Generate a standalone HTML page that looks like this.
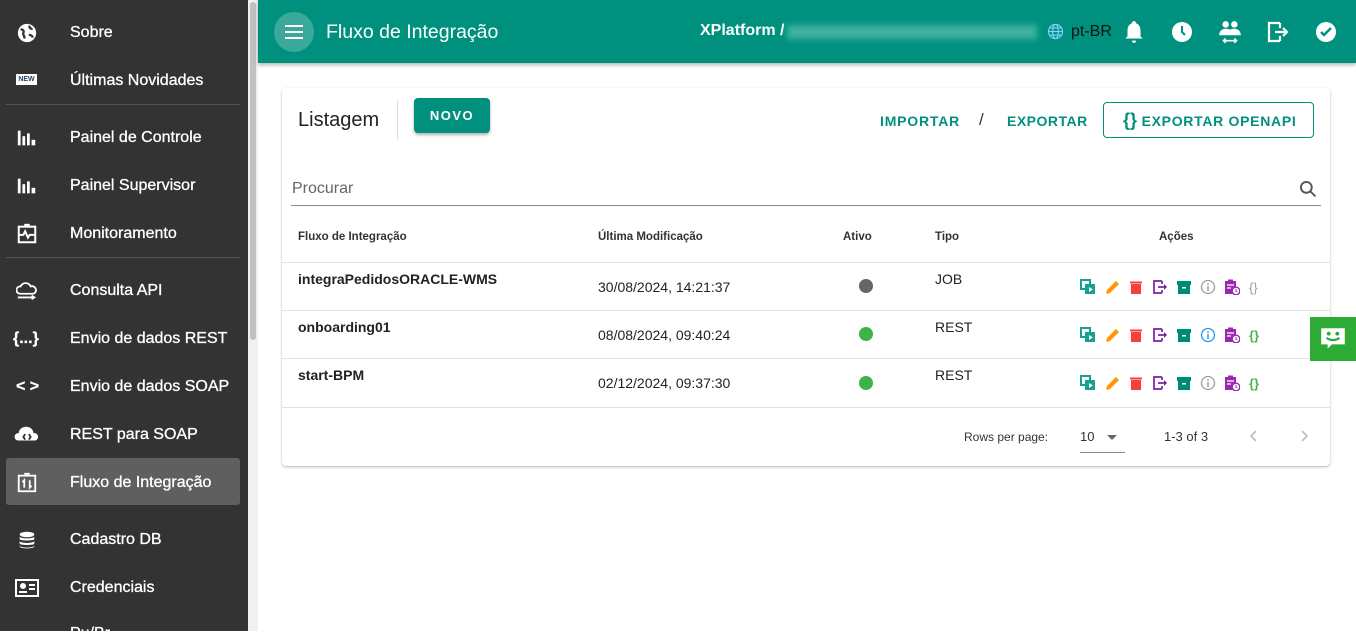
<!DOCTYPE html>
<html><head><meta charset="utf-8"><style>
*{box-sizing:border-box;margin:0;padding:0}
body{width:1356px;height:631px;overflow:hidden;background:#fff;font-family:"Liberation Sans",Arial,sans-serif;position:relative}
.sb{position:absolute;left:0;top:0;width:248px;height:631px;background:#333}
.scroll{position:absolute;left:248px;top:0;width:10px;height:631px;background:#f0f0f0}
.thumb{position:absolute;left:250px;top:2px;width:6px;height:338px;background:#c1c1c1;border-radius:3px}
.it{position:absolute;left:70px;color:#fff;font-size:16px;line-height:20px;margin-top:2px;-webkit-text-stroke:0.3px #fff}
.ic{position:absolute;left:16px;width:22px;height:22px;margin-top:2px}
.hr{position:absolute;left:6px;width:234px;height:1px;background:#555}
.hdr{position:absolute;left:258px;top:0;width:1098px;height:63px;background:#00917e;box-shadow:0 2px 4px rgba(0,0,0,.3)}
.card{position:absolute;left:282px;top:88px;width:1048px;height:378px;background:#fff;border-radius:4px;box-shadow:0 1px 3px rgba(0,0,0,.2),0 1px 1px rgba(0,0,0,.12)}
.a{position:absolute}
.th{position:absolute;top:231px;font-size:11.5px;color:#333;font-weight:bold}
.row{position:absolute;left:282px;width:1048px;height:1px;background:#e0e0e0}
.nm{position:absolute;left:298px;font-size:14px;font-weight:bold;color:#222}
.dt{position:absolute;left:598px;font-size:14px;color:#222}
.tp{position:absolute;left:935px;font-size:14px;color:#222}
.dot{position:absolute;left:859px;width:14px;height:14px;border-radius:50%}
.acts{position:absolute;left:1080px;display:flex;gap:8px}
.acts svg{width:16px;height:16px}
</style></head><body>
<div class="sb"></div><div class="scroll"></div><div class="thumb"></div>
<svg class="ic" style="top:20px" viewBox="0 0 24 24"><circle cx="12" cy="12" r="10" fill="#fff"/><path d="M5 8c3 0 4 2 3 4s2 3 1 6M15 4c-1 2 1 4 3 3M14 14c2 0 4 1 4 3" stroke="#333" stroke-width="2.5" fill="none"/></svg>
<div class="it" style="top:21px">Sobre</div>
<div class="a" style="left:16px;top:74px;width:21px;height:11px;background:#fff;color:#246;font-size:7px;font-weight:bold;text-align:center;line-height:11px">NEW</div>
<div class="it" style="top:69px">Últimas Novidades</div>
<div class="hr" style="top:104px"></div>
<svg class="ic" style="top:125px" viewBox="0 0 24 24" fill="#fff"><rect x="2" y="4" width="3" height="16"/><rect x="7" y="10" width="3" height="10"/><rect x="12" y="7" width="3" height="13"/><rect x="17" y="14" width="4" height="6"/></svg>
<div class="it" style="top:126px">Painel de Controle</div>
<svg class="ic" style="top:173px" viewBox="0 0 24 24" fill="#fff"><rect x="2" y="4" width="3" height="16"/><rect x="7" y="10" width="3" height="10"/><rect x="12" y="7" width="3" height="13"/><rect x="17" y="14" width="4" height="6"/></svg>
<div class="it" style="top:174px">Painel Supervisor</div>
<svg class="ic" style="top:221px" viewBox="0 0 24 24" fill="none" stroke="#fff" stroke-width="2.2"><rect x="3" y="4" width="18" height="17"/><path d="M3 13h5l2-4 3 7 2-3h6"/><path d="M9 2h6"/></svg>
<div class="it" style="top:222px">Monitoramento</div>
<div class="hr" style="top:257px"></div>
<svg class="ic" style="top:278px" viewBox="0 0 24 24" fill="none" stroke="#fff" stroke-width="2"><path d="M4 15a4 4 0 0 1 1-8a6 6 0 0 1 11 0a4 4 0 0 1 3 8z"/><path d="M2 19h18M17 17l3 2-3 2"/></svg>
<div class="it" style="top:279px">Consulta API</div>
<div class="it" style="left:13px;top:327px;font-weight:bold">{...}</div>
<div class="it" style="top:327px">Envio de dados REST</div>
<div class="it" style="left:16px;top:375px;font-weight:bold">&lt; &gt;</div>
<div class="it" style="top:375px">Envio de dados SOAP</div>
<svg class="ic" style="left:14px;width:26px;top:422px" viewBox="0 0 26 24"><path d="M3 18a4 4 0 0 1 1-8a8 7 0 0 1 16 0a4 4 0 0 1 2 8z" fill="#fff"/><path d="M11 11l-2 3 2 3M15 11l2 3-2 3" stroke="#333" stroke-width="2" fill="none"/></svg>
<div class="it" style="top:423px">REST para SOAP</div>
<div class="a" style="left:6px;top:458px;width:234px;height:47px;background:#5f5f5f;border-radius:3px"></div>
<svg class="ic" style="top:470px" viewBox="0 0 24 24" fill="none" stroke="#fff" stroke-width="2"><rect x="3" y="4" width="18" height="17"/><path d="M9 2h6M9 17V9l-2 2M15 9v8l2-2"/></svg>
<div class="it" style="top:471px">Fluxo de Integração</div>
<svg class="ic" style="top:527px" viewBox="0 0 24 24" fill="#fff"><ellipse cx="12" cy="6" rx="8" ry="3"/><path d="M4 8v3c0 2 16 2 16 0V8c0 3-16 3-16 0zM4 13v3c0 2 16 2 16 0v-3c0 3-16 3-16 0zM4 18v1c0 3 16 3 16 0v-1c0 3-16 3-16 0z"/></svg>
<div class="it" style="top:528px">Cadastro DB</div>
<svg class="ic" style="left:14px;top:575px;width:26px" viewBox="0 0 26 22" fill="none" stroke="#fff" stroke-width="2"><rect x="2" y="3" width="22" height="16"/><circle cx="9" cy="9" r="2" fill="#fff"/><path d="M5 15h8M15 8h6M15 12h6" /></svg>
<div class="it" style="top:576px">Credenciais</div>
<div class="it" style="top:622px">Pu/Br</div>

<div class="hdr"></div>
<div class="a" style="left:274px;top:12px;width:40px;height:40px;border-radius:50%;background:#3aa999"></div>
<div class="a" style="left:285px;top:25px;width:18px;height:2px;background:#fff;box-shadow:0 6px 0 #fff,0 12px 0 #fff"></div>
<div class="a" style="left:326px;top:21px;color:#fff;font-size:19.5px">Fluxo de Integração</div>
<div class="a" style="left:700px;top:22px;color:#fff;font-size:16px;font-weight:bold">XPlatform /</div>
<div class="a" style="left:787px;top:25px;width:250px;height:14px;background:#3fb0a0;filter:blur(3px)"></div>
<svg class="a" style="left:1047px;top:23px;width:17px;height:17px" viewBox="0 0 24 24" fill="none" stroke="#7fd0ff" stroke-width="1.6"><circle cx="12" cy="12" r="10"/><ellipse cx="12" cy="12" rx="4" ry="10"/><path d="M2 12h20M4 7h16M4 17h16"/></svg>
<div class="a" style="left:1071px;top:23px;color:#111;font-size:16px">pt-BR</div>
<svg class="a" style="left:1121px;top:18px;width:26px;height:28px" viewBox="0 0 24 24" fill="#fff"><path d="M12 2a2 2 0 0 1 2 2c3 1 4 4 4 7v5l2 2H4l2-2v-5c0-3 1-6 4-7a2 2 0 0 1 2-2zM10 20h4a2 2 0 0 1-4 0z"/></svg>
<svg class="a" style="left:1170px;top:20px;width:24px;height:24px" viewBox="0 0 24 24"><circle cx="12" cy="12" r="10" fill="#fff"/><path d="M12 6v6l3 3" stroke="#00917e" stroke-width="2" fill="none"/></svg>
<svg class="a" style="left:1217px;top:19px;width:26px;height:26px" viewBox="0 0 24 24" fill="#fff"><circle cx="8" cy="5" r="3"/><circle cx="16" cy="5" r="3"/><path d="M2 15c0-4 3-6 6-6s4 1 4 1 1-1 4-1 6 2 6 6z"/><path d="M6 20h12M8 18l-2 2 2 2M16 18l2 2-2 2" stroke="#fff" stroke-width="1.5" fill="none"/></svg>
<svg class="a" style="left:1266px;top:20px;width:24px;height:24px" viewBox="0 0 24 24" fill="none" stroke="#fff" stroke-width="2.2"><path d="M14 3H3v18h11M14 8v-5M14 21v-5"/><path d="M9 12h12M17 8l4 4-4 4"/></svg>
<svg class="a" style="left:1314px;top:20px;width:24px;height:24px" viewBox="0 0 24 24"><circle cx="12" cy="12" r="10" fill="#fff"/><path d="M7 12l3 3 7-7" stroke="#00917e" stroke-width="2.4" fill="none"/></svg>

<div class="card"></div>
<div class="a" style="left:298px;top:109px;font-size:20px;color:#222">Listagem</div>
<div class="a" style="left:397px;top:100px;width:1px;height:40px;background:#ddd"></div>
<div class="a" style="left:414px;top:98px;width:76px;height:35px;background:#00917e;border-radius:4px;box-shadow:0 2px 3px rgba(0,0,0,.3);color:#fff;font-size:13px;font-weight:bold;letter-spacing:1.5px;text-align:center;line-height:35px">NOVO</div>
<div class="a" style="left:880px;top:113px;color:#00917e;font-size:14px;font-weight:bold;letter-spacing:0.8px">IMPORTAR</div>
<div class="a" style="left:979px;top:110px;color:#333;font-size:17px">/</div>
<div class="a" style="left:1007px;top:113px;color:#00917e;font-size:14px;font-weight:bold;letter-spacing:0.5px">EXPORTAR</div>
<div class="a" style="left:1103px;top:102px;width:211px;height:36px;border:1px solid #00917e;border-radius:4px;color:#00917e;font-size:14px;font-weight:bold;letter-spacing:0.7px;line-height:34px;padding-left:19px;white-space:nowrap"><span style="font-size:18px;letter-spacing:0">{}</span> EXPORTAR OPENAPI</div>
<div class="a" style="left:292px;top:180px;font-size:16px;color:#666">Procurar</div>
<svg class="a" style="left:1298px;top:179px;width:20px;height:20px" viewBox="0 0 24 24" fill="none" stroke="#555" stroke-width="2.3"><circle cx="10" cy="10" r="6.5"/><path d="M15 15l6 6"/></svg>
<div class="a" style="left:291px;top:205px;width:1030px;height:1px;background:#888"></div>
<div class="th" style="left:298px">Fluxo de Integração</div>
<div class="th" style="left:598px">Última Modificação</div>
<div class="th" style="left:843px">Ativo</div>
<div class="th" style="left:935px">Tipo</div>
<div class="th" style="left:1159px">Ações</div>
<div class="row" style="top:262px"></div><div class="row" style="top:310px"></div><div class="row" style="top:358px"></div><div class="row" style="top:407px"></div>

<div class="nm" style="top:271px">integraPedidosORACLE-WMS</div>
<div class="dt" style="top:279px">30/08/2024, 14:21:37</div>
<div class="dot" style="top:279px;background:#666"></div>
<div class="tp" style="top:271px">JOB</div>
<div class="nm" style="top:319px">onboarding01</div>
<div class="dt" style="top:327px">08/08/2024, 09:40:24</div>
<div class="dot" style="top:327px;background:#3cb44a"></div>
<div class="tp" style="top:319px">REST</div>
<div class="nm" style="top:367px">start-BPM</div>
<div class="dt" style="top:375px">02/12/2024, 09:37:30</div>
<div class="dot" style="top:376px;background:#3cb44a"></div>
<div class="tp" style="top:367px">REST</div>

<svg width="0" height="0" style="position:absolute"><defs>
<g id="cp"><rect x="1" y="1" width="9" height="9" fill="none" stroke="#17a08c" stroke-width="2"/><rect x="5" y="5" width="10" height="10" fill="#17a08c"/><path d="M9 8l4 2.5-4 2.5z" fill="#fff"/></g>
<g id="ed"><path d="M2 15l1-4 9-9 3 3-9 9z" fill="#ff9800"/></g>
<g id="tr"><rect x="3" y="5" width="10" height="10" fill="#f44336"/><rect x="2" y="2.5" width="12" height="2" fill="#f44336"/></g>
<g id="ex"><path d="M10 2H2v12h8M10 5V2M10 14v-3" fill="none" stroke="#7b1fa2" stroke-width="1.7"/><path d="M6 8h7" stroke="#7b1fa2" stroke-width="1.7"/><path d="M12 5l3 3-3 3z" fill="#7b1fa2"/></g>
<g id="ar"><rect x="1" y="2" width="14" height="4" fill="#00897b"/><rect x="2" y="6" width="12" height="9" fill="#00897b"/><rect x="6" y="8" width="4" height="1.5" fill="#fff"/></g>
<g id="cal"><rect x="1" y="2" width="11" height="13" fill="#9c27b0"/><rect x="4" y="0.5" width="5" height="3" fill="#9c27b0"/><path d="M3 6h7M3 9h4" stroke="#fff" stroke-width="1.2"/><circle cx="12" cy="12" r="3.8" fill="#fff" stroke="#9c27b0" stroke-width="1.4"/><path d="M12 10v2l1.3 1" stroke="#9c27b0" stroke-width="1" fill="none"/></g>
</defs></svg>

<div class="acts" style="top:279px">
<svg viewBox="0 0 16 16"><use href="#cp"/></svg><svg viewBox="0 0 16 16"><use href="#ed"/></svg><svg viewBox="0 0 16 16"><use href="#tr"/></svg><svg viewBox="0 0 16 16"><use href="#ex"/></svg><svg viewBox="0 0 16 16"><use href="#ar"/></svg>
<svg viewBox="0 0 16 16"><circle cx="8" cy="8" r="6.5" fill="none" stroke="#9e9e9e" stroke-width="1.3"/><path d="M8 7v5M8 4.5v1.5" stroke="#9e9e9e" stroke-width="1.5"/></svg>
<svg viewBox="0 0 16 16"><use href="#cal"/></svg>
<svg viewBox="0 0 16 16"><text x="1" y="13" font-size="13" fill="#9e9e9e" font-family="Liberation Sans">{}</text></svg>
</div>
<div class="acts" style="top:327px">
<svg viewBox="0 0 16 16"><use href="#cp"/></svg><svg viewBox="0 0 16 16"><use href="#ed"/></svg><svg viewBox="0 0 16 16"><use href="#tr"/></svg><svg viewBox="0 0 16 16"><use href="#ex"/></svg><svg viewBox="0 0 16 16"><use href="#ar"/></svg>
<svg viewBox="0 0 16 16"><circle cx="8" cy="8" r="6.5" fill="none" stroke="#2196f3" stroke-width="1.3"/><path d="M8 7v5M8 4.5v1.5" stroke="#2196f3" stroke-width="1.5"/></svg>
<svg viewBox="0 0 16 16"><use href="#cal"/></svg>
<svg viewBox="0 0 16 16"><text x="1" y="13" font-size="13" fill="#4caf50" font-weight="bold" font-family="Liberation Sans">{}</text></svg>
</div>
<div class="acts" style="top:375px">
<svg viewBox="0 0 16 16"><use href="#cp"/></svg><svg viewBox="0 0 16 16"><use href="#ed"/></svg><svg viewBox="0 0 16 16"><use href="#tr"/></svg><svg viewBox="0 0 16 16"><use href="#ex"/></svg><svg viewBox="0 0 16 16"><use href="#ar"/></svg>
<svg viewBox="0 0 16 16"><circle cx="8" cy="8" r="6.5" fill="none" stroke="#9e9e9e" stroke-width="1.3"/><path d="M8 7v5M8 4.5v1.5" stroke="#9e9e9e" stroke-width="1.5"/></svg>
<svg viewBox="0 0 16 16"><use href="#cal"/></svg>
<svg viewBox="0 0 16 16"><text x="1" y="13" font-size="13" fill="#4caf50" font-weight="bold" font-family="Liberation Sans">{}</text></svg>
</div>

<div class="a" style="left:964px;top:430px;font-size:12px;color:#333">Rows per page:</div>
<div class="a" style="left:1080px;top:429px;font-size:13px;color:#333">10</div>
<div class="a" style="left:1107px;top:435px;width:0;height:0;border-left:5px solid transparent;border-right:5px solid transparent;border-top:5px solid #666"></div>
<div class="a" style="left:1080px;top:452px;width:45px;height:1px;background:#888"></div>
<div class="a" style="left:1164px;top:429px;font-size:13px;color:#333">1-3 of 3</div>
<svg class="a" style="left:1246px;top:428px;width:16px;height:16px" viewBox="0 0 16 16" fill="none" stroke="#bbb" stroke-width="1.6"><path d="M10 3l-5 5 5 5"/></svg>
<svg class="a" style="left:1296px;top:428px;width:16px;height:16px" viewBox="0 0 16 16" fill="none" stroke="#bbb" stroke-width="1.6"><path d="M6 3l5 5-5 5"/></svg>

<div class="a" style="left:1310px;top:317px;width:46px;height:44px;background:#2eab35"></div>
<svg class="a" style="left:1318px;top:324px;width:30px;height:30px" viewBox="0 0 28 28"><path d="M3 4h22v15H13l-4 4v-4H3z" fill="#fff"/><circle cx="10" cy="9" r="1.8" fill="#2eab35"/><circle cx="18" cy="9" r="1.8" fill="#2eab35"/><path d="M8 13q6 4 12 0" stroke="#2eab35" stroke-width="2" fill="none"/></svg>
</body></html>
